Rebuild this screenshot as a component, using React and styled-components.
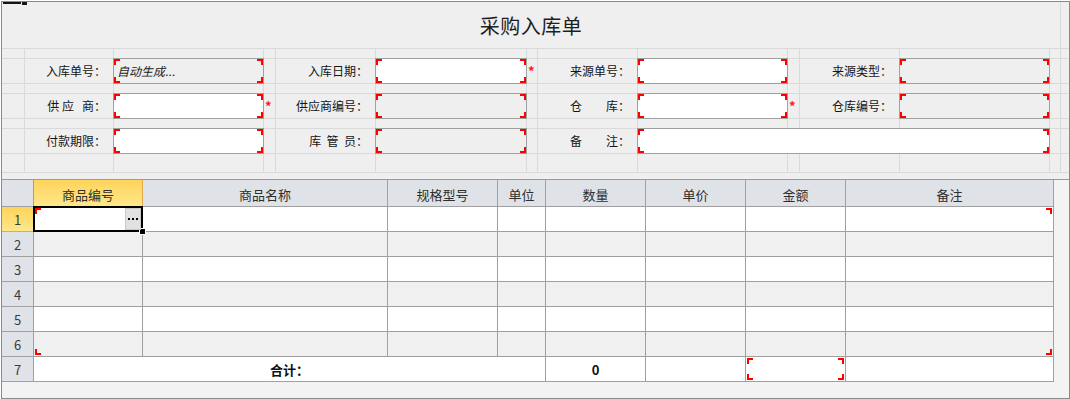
import React from "react";
import styled, { createGlobalStyle } from "styled-components";

const GlobalStyle = createGlobalStyle`
  html, body {
    margin: 0;
    padding: 0;
    background: #ffffff;
  }
  body {
    font-family: "Noto Sans CJK SC", "Noto Sans", sans-serif;
    color: #222;
  }
  * {
    box-sizing: border-box;
  }
`;

const Frame = styled.div`
  position: relative;
  margin: 1px 0 0 1px;
  width: 1069px;
  height: 398px;
  border: 1px solid #8a8a8a;
  background: #efefef;
  display: flex;
  flex-direction: column;
  overflow: hidden;
`;

const Grip = styled.span`
  position: absolute;
  top: 0;
  left: ${(p) => p.$left}px;
  width: ${(p) => p.$w}px;
  height: ${(p) => p.$h}px;
  background: #151515;
  z-index: 5;
`;

/* ---------- header form ---------- */

const FormPanel = styled.div`
  flex: none;
  height: 177px;
  background: #efefef;
`;

const FormGrid = styled.div`
  display: grid;
  grid-template-columns: 22px 88px 149px 11px 99px 150px 10px 99px 149px 11px 99px 149px 10px 1fr;
  grid-template-rows: 46px 9px 24px 9px 24px 9px 24px 18px;
  gap: 1px;
  padding-bottom: 1px;
  background: #dadada;
`;

const Title = styled.div`
  grid-column: 1 / 14;
  background: #efefef;
  display: flex;
  align-items: center;
  justify-content: center;
  font-size: 20px;
  color: #1e1e1e;
  letter-spacing: 0.5px;
`;

const FCell = styled.div`
  background: #efefef;
`;

const Label = styled(FCell)`
  font-size: 12px;
  line-height: 24px;
  text-align: right;
  padding-right: 7px;
  white-space: pre;
  color: #151515;
`;

const Star = styled(FCell)`
  color: #ff1a1a;
  font-size: 13px;
  font-weight: bold;
  line-height: 24px;
  padding-left: 1px;
`;

const Field = styled.div`
  position: relative;
  z-index: 1;
  grid-column: span ${(p) => p.$span || 1};
  margin: -1px;
  border: 1px solid #a0a0a0;
  background: ${(p) => (p.$readonly ? "#efefef" : "#ffffff")};
  padding-left: 3px;
  font-size: 12px;
  line-height: 24px;
  font-style: italic;
  color: #222;
`;

const Corner = styled.i`
  position: absolute;
  width: 6px;
  height: 6px;
  border: 0 solid #ff0000;
  z-index: 4;
  ${(p) => (p.$v === "t" ? `top: ${p.$inset}px; border-top-width: 2px;` : `bottom: ${p.$inset}px; border-bottom-width: 2px;`)}
  ${(p) => (p.$h === "l" ? `left: ${p.$inset}px; border-left-width: 2px;` : `right: ${p.$inset}px; border-right-width: 2px;`)}
`;

function Brackets({ inset = 0, only }) {
  const all = ["tl", "tr", "bl", "br"];
  return (only || all).map((k) => (
    <Corner key={k} $v={k[0]} $h={k[1]} $inset={inset} />
  ));
}

const blank = { t: "blank" };
const spacer = Array(14).fill(blank);

const formRows = [
  [
    blank,
    { t: "label", text: "入库单号：" },
    { t: "field", ro: true, text: "自动生成..." },
    blank,
    { t: "label", text: "入库日期：" },
    { t: "field" },
    { t: "star" },
    { t: "label", text: "来源单号：" },
    { t: "field" },
    blank,
    { t: "label", text: "来源类型：" },
    { t: "field", ro: true },
    blank,
    blank,
  ],
  [
    blank,
    { t: "label", text: "供 应   商：" },
    { t: "field" },
    { t: "star" },
    { t: "label", text: "供应商编号：" },
    { t: "field", ro: true },
    blank,
    { t: "label", text: "仓\u3000\u3000库：" },
    { t: "field" },
    { t: "star" },
    { t: "label", text: "仓库编号：" },
    { t: "field", ro: true },
    blank,
    blank,
  ],
  [
    blank,
    { t: "label", text: "付款期限：" },
    { t: "field" },
    blank,
    { t: "label", text: "库  管  员：" },
    { t: "field", ro: true },
    blank,
    { t: "label", text: "备\u3000\u3000注：" },
    { t: "field", span: 4 },
    blank,
    blank,
  ],
];

function FormItem({ item }) {
  if (item.t === "label") return <Label>{item.text}</Label>;
  if (item.t === "star") return <Star>*</Star>;
  if (item.t === "field")
    return (
      <Field $readonly={item.ro} $span={item.span}>
        {item.text}
        <Brackets />
      </Field>
    );
  return <FCell />;
}

function HeaderForm() {
  const rows = [spacer, formRows[0], spacer, formRows[1], spacer, formRows[2], spacer];
  return (
    <FormPanel>
      <FormGrid>
        <Title>采购入库单</Title>
        <FCell />
        {rows.map((row, r) =>
          row.map((item, c) => <FormItem key={`${r}-${c}`} item={item} />)
        )}
      </FormGrid>
    </FormPanel>
  );
}

/* ---------- detail grid ---------- */

const GridPanel = styled.div`
  flex: 1;
  border-top: 1px solid #9a9a9a;
  background: #f3f3f3;
`;

const Table = styled.div`
  display: grid;
  grid-template-columns: 31px 108px 244px 109px 47px 99px 99px 99px 207px;
  grid-template-rows: 26px repeat(7, 24px);
  gap: 1px;
  padding: 0 1px 1px 0;
  width: max-content;
  background: #a0a0a0;
  font-size: 12px;
`;

const gold = "linear-gradient(to bottom, #fdd45a, #ffe78a)";

const HeadCell = styled.div`
  position: relative;
  display: flex;
  align-items: center;
  justify-content: center;
  padding-top: 2px;
  font-size: 13px;
  color: #2e2e2e;
  background: ${(p) => (p.$active ? gold : "#dfe3e8")};
  box-shadow: ${(p) => (p.$active ? "1px 0 0 #e2aa48, 0 1px 0 #e2aa48" : "none")};
  z-index: ${(p) => (p.$active ? 1 : 0)};
`;

const RowHead = styled(HeadCell)`
  padding-top: 0;
  font-size: 13px;
  color: #3a3a3a;
`;

const BodyCell = styled.div`
  position: relative;
  display: flex;
  align-items: center;
  justify-content: center;
  background: ${(p) => (p.$alt ? "#f0f0f0" : "#ffffff")};
  grid-column: span ${(p) => p.$span || 1};
  font-weight: ${(p) => (p.$bold ? "bold" : "normal")};
  font-size: 13px;
  color: #111;
`;

const Selection = styled.div`
  position: absolute;
  top: -1px;
  left: -1px;
  right: -1px;
  bottom: -1px;
  border: 2px solid #000;
  z-index: 2;
`;

const FillHandle = styled.span`
  position: absolute;
  right: -4px;
  bottom: -4px;
  width: 5px;
  height: 5px;
  background: #000;
  outline: 1px solid #fff;
`;

const EllipsisButton = styled.span`
  position: absolute;
  top: 1px;
  right: 1px;
  bottom: 1px;
  width: 16px;
  display: flex;
  align-items: center;
  justify-content: center;
  background: #e1e1e1;
  border: 1px solid #c9c9c9;
  z-index: 3;
`;

const columns = ["商品编号", "商品名称", "规格型号", "单位", "数量", "单价", "金额", "备注"];

function cornersFor(row, col) {
  const list = [];
  if (row === 1 && col === 0) list.push("tl");
  if (row === 1 && col === 7) list.push("tr");
  if (row === 6 && col === 0) list.push("bl");
  if (row === 6 && col === 7) list.push("br");
  return list;
}

function DataRow({ n }) {
  return (
    <>
      <RowHead $active={n === 1}>{n}</RowHead>
      {columns.map((c, i) => {
        const corners = cornersFor(n, i);
        return (
          <BodyCell key={c} $alt={n % 2 === 0}>
            {corners.length > 0 && <Brackets inset={1} only={corners} />}
            {n === 1 && i === 0 && (
              <>
                <EllipsisButton>
                  <svg width="10" height="2" viewBox="0 0 10 2">
                    <rect x="0" y="0" width="2" height="2" fill="#000" />
                    <rect x="4" y="0" width="2" height="2" fill="#000" />
                    <rect x="8" y="0" width="2" height="2" fill="#000" />
                  </svg>
                </EllipsisButton>
                <Selection>
                  <FillHandle />
                </Selection>
              </>
            )}
          </BodyCell>
        );
      })}
    </>
  );
}

function DetailGrid() {
  return (
    <GridPanel>
      <Table>
        <HeadCell />
        {columns.map((c, i) => (
          <HeadCell key={c} $active={i === 0}>
            {c}
          </HeadCell>
        ))}
        {[1, 2, 3, 4, 5, 6].map((n) => (
          <DataRow key={n} n={n} />
        ))}
        <RowHead>7</RowHead>
        <BodyCell $span={4} $bold>
          合计：
        </BodyCell>
        <BodyCell $bold>0</BodyCell>
        <BodyCell />
        <BodyCell>
          <Brackets inset={1} />
        </BodyCell>
        <BodyCell />
      </Table>
    </GridPanel>
  );
}

export default function App() {
  return (
    <>
      <GlobalStyle />
      <Frame>
        <Grip $left={1} $w={18} $h={2} />
        <Grip $left={20} $w={5} $h={3} />
        <HeaderForm />
        <DetailGrid />
      </Frame>
    </>
  );
}
